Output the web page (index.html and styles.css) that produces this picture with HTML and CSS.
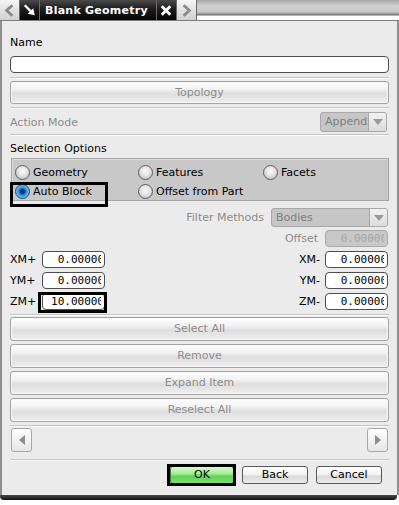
FILE: index.html
```html
<!DOCTYPE html>
<html lang="en">
<head>
    <meta charset="UTF-8">
    <title>Blank Geometry</title>
    <link rel="stylesheet" href="styles.css">
</head>
<body>
    <div class="dialog">
        <div class="titlebar">
            <div class="tab tab-light">
                <svg width="20" height="21" viewBox="0 0 20 21"><path d="M13 5 L7 10.5 L13 16" fill="none" stroke="#8a8a8a" stroke-width="3"/></svg>
            </div>
            <div class="tab tab-dark tab-icon">
                <svg width="20" height="21" viewBox="0 0 20 21"><path d="M5 5 L12 12" stroke="#fff" stroke-width="2.4"/><path d="M15.5 15.5 L8 14 L14 8 Z" fill="#fff"/></svg>
            </div>
            <div class="tab tab-dark tab-title">Blank Geometry</div>
            <div class="tab tab-dark tab-icon">
                <svg width="20" height="21" viewBox="0 0 20 21"><path d="M5 6 L14 15 M14 6 L5 15" stroke="#fff" stroke-width="3"/></svg>
            </div>
            <div class="tab tab-light">
                <svg width="20" height="21" viewBox="0 0 20 21"><path d="M7 5 L13 10.5 L7 16" fill="none" stroke="#8a8a8a" stroke-width="3"/></svg>
            </div>
            <div class="title-fill"></div>
        </div>

        <div class="panel">
            <div class="label name-label">Name</div>
            <div class="text-field"></div>
            <div class="sep"></div>
            <div class="wide-btn topology">Topology</div>
            <div class="sep sep-action"></div>

            <div class="row action-row">
                <span class="muted">Action Mode</span>
                <div class="combo combo-append">
                    <span class="combo-text">Append</span>
                    <span class="combo-arrow"></span>
                </div>
            </div>
            <div class="sep sep-selection"></div>

            <div class="label section-label">Selection Options</div>
            <div class="radio-group">
                <div class="radio"><span class="dot"></span>Geometry</div>
                <div class="radio"><span class="dot"></span>Features</div>
                <div class="radio"><span class="dot"></span>Facets</div>
                <div class="radio focused"><span class="dot checked"></span>Auto Block</div>
                <div class="radio"><span class="dot"></span>Offset from Part</div>
            </div>

            <div class="row filter-row">
                <span class="muted">Filter Methods</span>
                <div class="combo combo-filter">
                    <span class="combo-text">Bodies</span>
                    <span class="combo-arrow"></span>
                </div>
            </div>

            <div class="row offset-row">
                <span class="muted">Offset</span>
                <div class="num-field disabled"><div class="num-clip"><span>0.00000</span></div></div>
            </div>

            <div class="row coord-row">
                <span class="coord-label">XM+</span>
                <div class="num-field"><div class="num-clip"><span>0.00000</span></div></div>
                <div class="coord-right">
                    <span>XM-</span>
                    <div class="num-field"><div class="num-clip"><span>0.00000</span></div></div>
                </div>
            </div>
            <div class="row coord-row">
                <span class="coord-label">YM+</span>
                <div class="num-field"><div class="num-clip"><span>0.00000</span></div></div>
                <div class="coord-right">
                    <span>YM-</span>
                    <div class="num-field"><div class="num-clip"><span>0.00000</span></div></div>
                </div>
            </div>
            <div class="row coord-row">
                <span class="coord-label">ZM+</span>
                <div class="num-field focused"><div class="num-clip"><span>10.00000</span></div></div>
                <div class="coord-right">
                    <span>ZM-</span>
                    <div class="num-field"><div class="num-clip"><span>0.00000</span></div></div>
                </div>
            </div>
            <div class="sep"></div>

            <div class="wide-btn list-btn first">Select All</div>
            <div class="wide-btn list-btn">Remove</div>
            <div class="wide-btn list-btn">Expand Item</div>
            <div class="wide-btn list-btn">Reselect All</div>
            <div class="sep sep-action"></div>

            <div class="row scroll-row">
                <div class="arrow-btn">
                    <svg width="10" height="12" viewBox="0 0 10 12"><path d="M8 1 L2 6 L8 11 Z" fill="#8c8c8c"/></svg>
                </div>
                <div class="arrow-btn">
                    <svg width="10" height="12" viewBox="0 0 10 12"><path d="M2 1 L8 6 L2 11 Z" fill="#8c8c8c"/></svg>
                </div>
            </div>
            <div class="sep sep-footer"></div>

            <div class="footer">
                <div class="dlg-btn ok focused">OK</div>
                <div class="dlg-btn">Back</div>
                <div class="dlg-btn">Cancel</div>
            </div>
        </div>
        <div class="bottom-bar"></div>
    </div>
</body>
</html>
```

FILE: styles.css
```css
* {
    margin: 0;
    padding: 0;
    box-sizing: border-box;
}

body {
    background: #fff;
    font-family: "DejaVu Sans", Verdana, sans-serif;
    font-size: 11px;
    color: #000;
}

.dialog {
    width: 399px;
}

/* title bar */
.titlebar {
    display: flex;
    height: 21px;
    border-bottom: 1px solid #7c7c7c;
}

.tab {
    height: 20px;
    display: flex;
    align-items: center;
    justify-content: center;
    border-right: 1px solid #6a6a6a;
}

.tab-light {
    width: 20px;
    background: linear-gradient(#f6f6f6, #e2e2e2 50%, #d0d0d0);
}

.tab-dark {
    background: linear-gradient(#4a4a4a, #1c1c1c 45%, #050505);
    color: #fff;
}

.tab-icon {
    width: 20px;
}

.tab-title {
    width: 117px;
    justify-content: flex-start;
    padding-left: 5px;
    font-weight: bold;
    font-size: 11px;
    letter-spacing: 0.25px;
}

.title-fill {
    flex: 1;
    height: 20px;
    background: linear-gradient(#a8a8a8 0, #bcbcbc 3px, #d2d2d2 6px, #c6c6c6 12px, #949494 14px, #6c6c6c 15px, #fff 16px, #fff 20px);
}

/* main panel */
.panel {
    height: 474px;
    background: #ebebeb;
    border-left: 2px solid #8e8e8e;
    border-right: 2px solid #8e8e8e;
    padding: 15px 8px 0;
}

.label {
    height: 14px;
    line-height: 14px;
}

.muted {
    color: #8c8c8c;
}

.text-field {
    margin-top: 6px;
    height: 17px;
    background: #fff;
    border: 1px solid #4e4e4e;
    border-radius: 4px;
}

.sep {
    margin-top: 4px;
    height: 2px;
    border-top: 1px solid #c6c6c6;
    border-bottom: 1px solid #fbfbfb;
}

.sep-action {
    margin-top: 3px;
}

.sep-selection {
    margin-top: 2px;
}

.sep-footer {
    margin-top: 7px;
}

.wide-btn {
    margin-top: 4px;
    height: 23px;
    line-height: 21px;
    text-align: center;
    color: #8c8c8c;
    border: 1px solid #a4a4a4;
    border-radius: 3px;
    background: linear-gradient(#fefefe, #f2f2f2 35%, #dedede 55%, #eeeeee);
    box-shadow: inset 0 0 0 1px #f8f8f8;
}

.wide-btn.topology {
    margin-top: 2px;
}

.wide-btn.list-btn {
    margin-top: 3px;
    height: 24px;
    line-height: 22px;
}

.wide-btn.first {
    margin-top: 1px;
}

.row {
    display: flex;
    align-items: center;
}

.action-row {
    margin-top: 3px;
    height: 20px;
    justify-content: space-between;
    padding-right: 2px;
}

/* combo boxes */
.combo {
    display: flex;
    height: 20px;
    border: 1px solid #a8a8a8;
    border-radius: 3px;
    background: #c6c6c6;
    overflow: hidden;
}

.combo-text {
    flex: 1;
    padding-left: 4px;
    line-height: 18px;
    color: #7e7e7e;
}

.combo-arrow {
    width: 18px;
    border-left: 1px solid #a8a8a8;
    background: linear-gradient(#f2f2f2, #dcdcdc);
    position: relative;
}

.combo-arrow::after {
    content: '';
    position: absolute;
    left: 4px;
    top: 6px;
    border-left: 5px solid transparent;
    border-right: 5px solid transparent;
    border-top: 6px solid #9a9a9a;
}

.combo-append {
    width: 67px;
}

.section-label {
    margin-top: 6px;
}

/* radio group */
.radio-group {
    margin-top: 2px;
    height: 43px;
    margin-left: 1px;
    background: #c8c8c8;
    border: 1px solid #a6a6a6;
    box-shadow: inset 1px 1px 0 #dadada;
    padding: 4px 0 0 3px;
    display: grid;
    grid-template-columns: 123px 125px 1fr;
    grid-auto-rows: 19px;
}

.radio {
    display: flex;
    align-items: center;
    gap: 3px;
    position: relative;
}

.radio.focused::after {
    content: '';
    position: absolute;
    left: -5px;
    top: 0;
    width: 92px;
    bottom: -6px;
    border: 3px solid #000;
}

.dot {
    width: 15px;
    height: 15px;
    border-radius: 50%;
    border: 1px solid #5e5e5e;
    background: radial-gradient(circle at 50% 40%, #fafafa 0, #e4e4e4 45%, #b4b4b4 100%);
}

.dot.checked {
    border-color: #25456a;
    background: radial-gradient(circle at 50% 50%, #0a2a58 0, #0d3f86 25%, #2a8ee0 40%, #6cc0f4 70%, #d8eefa 100%);
}

/* filter / offset */
.filter-row {
    margin-top: 7px;
    height: 19px;
    justify-content: flex-end;
    gap: 7px;
    padding-right: 1px;
}

.combo-filter {
    width: 117px;
    height: 19px;
}

.offset-row {
    margin-top: 3px;
    height: 17px;
    justify-content: flex-end;
    gap: 7px;
    padding-right: 1px;
}

/* numeric fields */
.num-field {
    width: 63px;
    height: 17px;
    border: 1px solid #4e4e4e;
    border-radius: 4px;
    background: #fff;
    padding-right: 3px;
    font-family: "DejaVu Sans Mono", monospace;
    font-size: 11px;
    line-height: 15px;
    position: relative;
}

.num-clip {
    display: flex;
    justify-content: flex-end;
    overflow: hidden;
    white-space: nowrap;
}

.num-clip span {
    margin-right: -3px;
}

.num-field.disabled {
    background: #c8c8c8;
    border-color: #aaaaaa;
    color: #a6a6a6;
}

.num-field.focused::after {
    content: '';
    position: absolute;
    left: -5px;
    top: -2px;
    right: -3px;
    bottom: -4px;
    border: 3px solid #000;
}

.coord-row {
    margin-top: 4px;
    height: 17px;
    padding-right: 1px;
}

.coord-label {
    width: 32px;
}

.coord-right {
    margin-left: auto;
    display: flex;
    align-items: center;
    gap: 5px;
}

/* scroll arrows */
.scroll-row {
    margin-top: 1px;
    height: 24px;
    justify-content: space-between;
    padding: 0 1px;
}

.arrow-btn {
    width: 21px;
    height: 24px;
    display: flex;
    align-items: center;
    justify-content: center;
    border: 1px solid #a8a8a8;
    border-radius: 3px;
    background: linear-gradient(#fefefe, #e6e6e6);
}

/* footer buttons */
.footer {
    margin-top: 5px;
    display: flex;
    justify-content: flex-end;
    gap: 8px;
    padding-right: 7px;
}

.dlg-btn {
    width: 66px;
    height: 18px;
    line-height: 16px;
    text-align: center;
    border: 1px solid #5a5a5a;
    border-radius: 3px;
    background: linear-gradient(#ffffff, #f4f4f4 45%, #dadada 60%, #ececec);
    position: relative;
}

.dlg-btn.ok {
    width: 64px;
    border-color: #3e7a3e;
    background: linear-gradient(#d6fbc8, #a6ee96 40%, #62d05a 60%, #7ee072);
}

.dlg-btn.focused::after {
    content: '';
    position: absolute;
    left: -4px;
    top: -3px;
    right: -3px;
    bottom: -3px;
    border: 3px solid #000;
}

.bottom-bar {
    width: 397px;
    height: 5px;
    background: linear-gradient(#4a4a4a, #141414);
    border-radius: 0 0 4px 4px;
}
```
